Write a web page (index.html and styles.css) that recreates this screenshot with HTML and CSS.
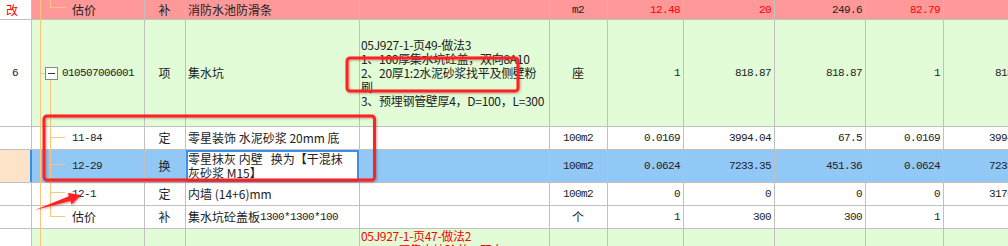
FILE: index.html
```html
<!DOCTYPE html>
<html lang="zh-CN">
<head>
  <meta charset="UTF-8">
  <title>分部分项</title>
  <link rel="stylesheet" href="styles.css">
</head>
<body>
  <div class="sheet">
    <div class="row pink h-top">
      <div class="c c0 mark">改</div>
      <div class="c c1 code">估价</div>
      <div class="c c2 center">补</div>
      <div class="c c3">消防水池防滑条</div>
      <div class="c c4"></div>
      <div class="c c5 center num">m2</div>
      <div class="c c6 num red">12.48</div>
      <div class="c c7 num red">20</div>
      <div class="c c8 num">249.6</div>
      <div class="c c9 num red">82.79</div>
      <div class="c c10 num"></div>
    </div>

    <div class="row green h-big">
      <div class="c c0 center num">6</div>
      <div class="c c1 code-root"><span class="fold"></span><span class="mono">010507006001</span></div>
      <div class="c c2 center">项</div>
      <div class="c c3">集水坑</div>
      <div class="c c4 feature">
        <div>05J927-1-页49-做法3</div>
        <div>1、100厚集水坑砼盖，双向8A10</div>
        <div>2、20厚1:2水泥砂浆找平及侧壁粉</div>
        <div>刷</div>
        <div>3、预埋钢管壁厚4，D=100，L=300</div>
      </div>
      <div class="c c5 center">座</div>
      <div class="c c6 num">1</div>
      <div class="c c7 num">818.87</div>
      <div class="c c8 num">818.87</div>
      <div class="c c9 num">1</div>
      <div class="c c10 num">818.87</div>
    </div>

    <div class="row h-std">
      <div class="c c0"></div>
      <div class="c c1 code mono">11-84</div>
      <div class="c c2 center">定</div>
      <div class="c c3">零星装饰 水泥砂浆 20mm 底</div>
      <div class="c c4"></div>
      <div class="c c5 center num">100m2</div>
      <div class="c c6 num">0.0169</div>
      <div class="c c7 num">3994.04</div>
      <div class="c c8 num">67.5</div>
      <div class="c c9 num">0.0169</div>
      <div class="c c10 num">3994.04</div>
    </div>

    <div class="row selected h-sel">
      <div class="c c0 current"></div>
      <div class="c c1 code mono">12-29</div>
      <div class="c c2 center">换</div>
      <div class="c c3 editing">
        <div>零星抹灰 内壁&nbsp;&nbsp;&nbsp;换为【干混抹</div>
        <div>灰砂浆 M15】</div>
      </div>
      <div class="c c4"></div>
      <div class="c c5 center num">100m2</div>
      <div class="c c6 num">0.0624</div>
      <div class="c c7 num">7233.35</div>
      <div class="c c8 num">451.36</div>
      <div class="c c9 num">0.0624</div>
      <div class="c c10 num">7233.35</div>
    </div>

    <div class="row h-std">
      <div class="c c0"></div>
      <div class="c c1 code mono">12-1</div>
      <div class="c c2 center">定</div>
      <div class="c c3">内墙 (14+6)mm</div>
      <div class="c c4"></div>
      <div class="c c5 center num">100m2</div>
      <div class="c c6 num">0</div>
      <div class="c c7 num">0</div>
      <div class="c c8 num">0</div>
      <div class="c c9 num">0</div>
      <div class="c c10 num">3176.16</div>
    </div>

    <div class="row h-std">
      <div class="c c0"></div>
      <div class="c c1 code">估价</div>
      <div class="c c2 center">补</div>
      <div class="c c3">集水坑砼盖板<span class="mono">1300*1300*100</span></div>
      <div class="c c4"></div>
      <div class="c c5 center">个</div>
      <div class="c c6 num">1</div>
      <div class="c c7 num">300</div>
      <div class="c c8 num">300</div>
      <div class="c c9 num">1</div>
      <div class="c c10 num">300</div>
    </div>

    <div class="row green h-last">
      <div class="c c0"></div>
      <div class="c c1"></div>
      <div class="c c2"></div>
      <div class="c c3"></div>
      <div class="c c4 feature top red">
        <div>05J927-1-页47-做法2</div>
        <div>1、100厚集水坑砼盖，双向8A10</div>
      </div>
      <div class="c c5"></div>
      <div class="c c6"></div>
      <div class="c c7"></div>
      <div class="c c8"></div>
      <div class="c c9"></div>
      <div class="c c10"></div>
    </div>

    <!-- 树形连线 + 标注 -->
    <svg class="overlay" width="1008" height="246" viewBox="0 0 1008 246">
      <defs>
        <filter id="shade" x="-5%" y="-5%" width="110%" height="120%">
          <feDropShadow dx="1" dy="1" stdDeviation="0.8" flood-color="#600" flood-opacity="0.35"/>
        </filter>
      </defs>
      <g class="tree">
        <path d="M40.5 0 V246"/>
        <path d="M50.5 0 V7.5 H66"/>
        <path d="M40 73.5 H45"/>
        <path d="M50.5 80 V216.5"/>
        <path d="M50 137.5 H65"/>
        <path d="M50 164.5 H65"/>
        <path d="M50 192.5 H65"/>
        <path d="M50 216.5 H65"/>
      </g>
      <g class="note" filter="url(#shade)">
        <rect x="44" y="116" width="330.5" height="64" rx="3"/>
        <rect x="347" y="58" width="171" height="33" rx="3"/>
        <polygon class="arrow" points="35,210 68.8,196.3 67.7,193 81,195 71.5,204.4 70.4,201.1"/>
      </g>
    </svg>
  </div>
</body>
</html>
```

FILE: styles.css
```css
* {
  box-sizing: border-box;
}
body {
  margin: 0;
  font-family: "Noto Sans CJK SC", sans-serif;
  font-size: 12px;
  color: #222;
  background: #fff;
}
.sheet {
  position: relative;
  width: 1008px;
  height: 246px;
  overflow: hidden;
}
.row {
  display: flex;
  border-bottom: 1px solid #c0c0c0;
  background: #fff;
}
.h-top { height: 20px; }
.h-big { height: 107px; }
.h-std { height: 23px; }
.h-sel { height: 33px; }
.h-last { height: 40px; }

.pink { background: #ff9898; }
.green { background: #e1fcd6; }
.selected { background: #92c8f6; }

.c {
  flex: none;
  display: flex;
  align-items: center;
  padding: 0 3px 0 2px;
  border-right: 1px solid #c0c0c0;
  white-space: nowrap;
  overflow: hidden;
  line-height: 14px;
}
.c0 { width: 32px; background: #fff; justify-content: center; }
.c1 { width: 113px; }
.c2 { width: 41px; }
.c3 { width: 174px; }
.c4 { width: 190px; padding-left: 1px; }
.c5 { width: 58px; }
.c6 { width: 76px; }
.c7 { width: 91px; }
.c8 { width: 91px; }
.c9 { width: 78px; }
.c10 { width: 91px; }

.center { justify-content: center; }
.red { color: #ff0000; }

.mark {
  justify-content: flex-start;
  padding-left: 6px;
  color: #ff0000;
}

.num {
  justify-content: flex-end;
  font-family: "Liberation Mono", monospace;
  font-size: 11px;
  letter-spacing: -0.6px;
}
.c5.num, .c0.num { justify-content: center; }

.mono {
  font-family: "Liberation Mono", monospace;
  font-size: 11px;
  letter-spacing: -0.6px;
}

.code { padding-left: 40px; }
.code-root { padding-left: 13px; }

.fold {
  flex: none;
  width: 13px;
  height: 13px;
  margin-right: 4px;
  border: 1px solid #888;
  background: #fff;
  display: flex;
  align-items: center;
  justify-content: center;
}
.fold::after {
  content: "";
  width: 7px;
  height: 1px;
  background: #333;
}

.feature {
  flex-direction: column;
  align-items: flex-start;
  justify-content: center;
  letter-spacing: -0.3px;
}
.feature.top { justify-content: flex-start; }

.current {
  background: #fde4c8;
  border-right: 2px solid #3a8ee6;
}
.editing {
  flex-direction: column;
  align-items: flex-start;
  justify-content: center;
  background: #fff;
  box-shadow: inset 0 0 0 2px #3d8ee8;
  padding-left: 2px;
}

.overlay {
  position: absolute;
  top: 0;
  left: 0;
  pointer-events: none;
}
.tree path {
  fill: none;
  stroke: #fcc47c;
  stroke-width: 1;
}
.note rect {
  fill: none;
  stroke: #ff2424;
  stroke-width: 3;
}
.note .arrow {
  fill: #ff2424;
  stroke: none;
}
```
